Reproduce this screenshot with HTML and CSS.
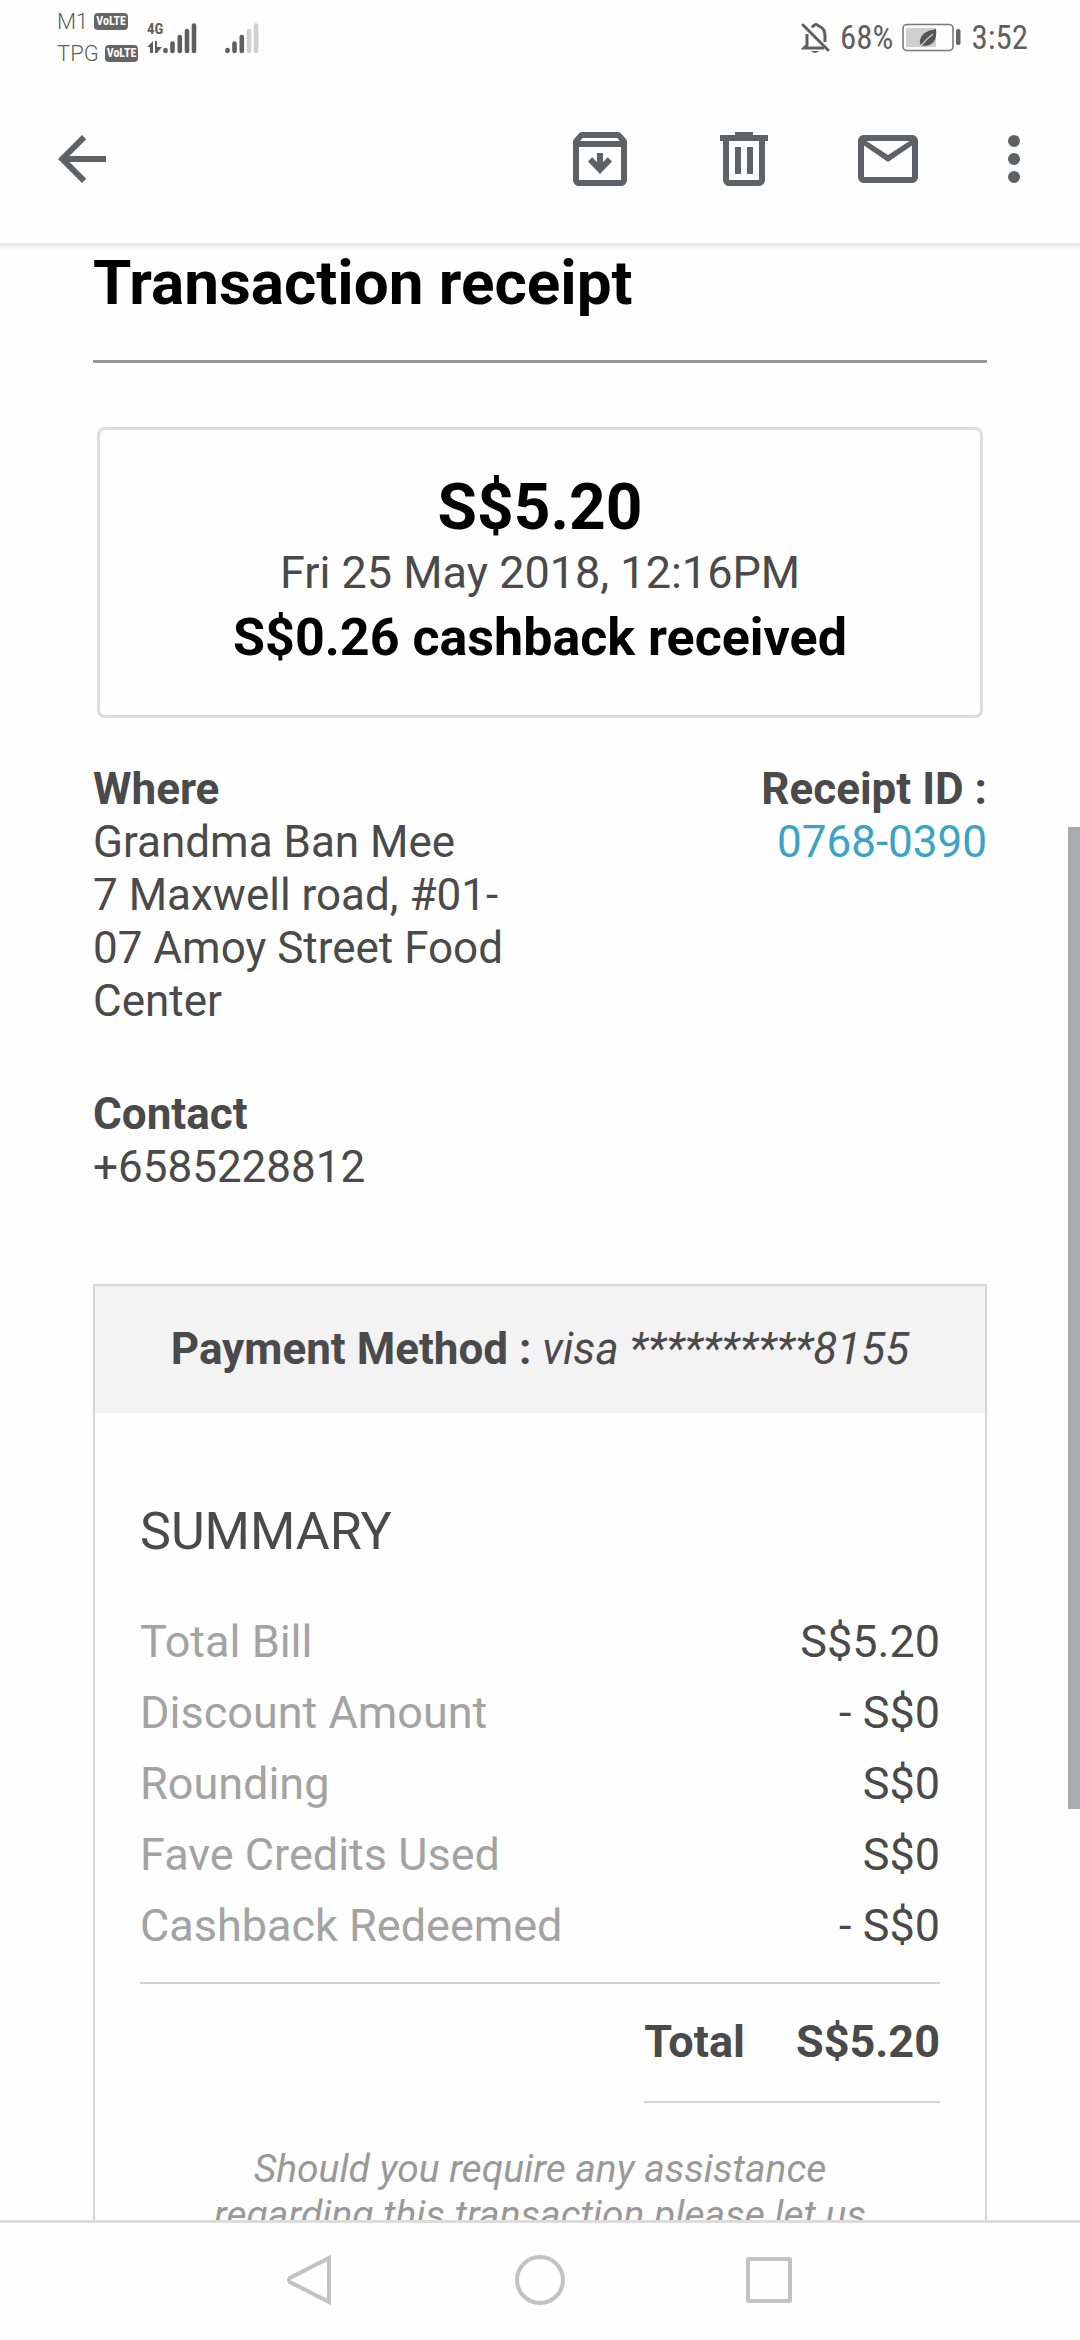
FILE: index.html
```html
<!DOCTYPE html>
<html lang="en">
<head>
<meta charset="utf-8">
<meta name="viewport" content="width=device-width, initial-scale=1">
<title>Transaction receipt</title>
<link rel="stylesheet" href="styles.css">
</head>
<body>
<div class="status">
  <div class="carriers">
    <div class="carrier"><span>M1</span><span class="volte">VoLTE</span></div>
    <div class="carrier"><span>TPG</span><span class="volte">VoLTE</span></div>
  </div>
  <div class="network">
    <span class="network-type">4G</span>
    <svg width="15" height="12" viewBox="0 0 15 12" fill="#5f5f5f"><path d="M6 0v12H3V6H0zM8 0h2v6h5l-5 6H8z"/></svg>
  </div>
  <svg class="signal" width="34" height="32" viewBox="0 0 34 32" stroke="#5f5f5f" stroke-width="4.600" stroke-linecap="round"><path d="M2.500 28v1M9.500 21.500v7.500M16.800 15v14M24 9v20M31 3.500v25.500"/></svg>
  <svg class="signal second" width="34" height="32" viewBox="0 0 34 32" stroke="#5f5f5f" stroke-width="4.600" stroke-linecap="round"><path d="M2.500 28v1M9.500 21.500v7.500M16.800 15v14"/><path stroke="#d0d0d0" d="M24 9v20M31 3.500v25.500"/></svg>
  <div class="status-right">
    <svg width="30" height="32" viewBox="0 0 30 32" fill="none" stroke="#5f5f5f" stroke-width="3"><path d="M6 12v11l-3 3h20M11 5.500Q12 4 12.500 3.800Q15 1 17.500 3.800Q24 6 24 14v6"/><path d="M2 3l25 25" stroke-linecap="round"/><path d="M10 29h8q-4 4-8 0z" fill="#5f5f5f" stroke="none"/></svg>
    <span>68%</span>
    <svg class="battery" width="60" height="30" viewBox="0 0 60 30"><rect x="1" y="1.500" width="50" height="26" rx="4" fill="none" stroke="#7a7a7a" stroke-width="1.600"/><rect x="4" y="5" width="30" height="19" fill="#cfcfcf"/><path d="M34 6Q20 8 18 17q-1 5 3 6Q36 23 34 6z" fill="#555"/><path d="M18 24Q24 16 31 11" stroke="#cfcfcf" stroke-width="1.300" fill="none"/><rect x="54" y="6" width="4.500" height="16" rx="2" fill="#666"/></svg>
    <span>3:52</span>
  </div>
</div>
<header class="toolbar">
  <button class="tool back" aria-label="Back"><svg viewBox="0 0 24 24"><path d="M20 11H7.830l5.590-5.590L12 4l-8 8 8 8 1.410-1.410L7.830 13H20z"/></svg></button>
  <button class="tool" aria-label="Archive"><svg viewBox="0 0 24 24"><path fill-rule="evenodd" d="M20.500 5.200L19 3.500C18.800 3.200 18.400 3 18 3H6c-.4 0-.8.2-1 .5L3.500 5.200C3.200 5.600 3 6 3 6.500V19c0 1.100.9 2 2 2h14c1.100 0 2-.9 2-2V6.500c0-.5-.2-.9-.5-1.300zM6.200 5h11.600l.8 1H5.400zM5 19V8h14v11zM11 10h2v3l1.600-1.600L16 12.800 12 17l-4-4.200 1.400-1.400L11 13z"/></svg></button>
  <button class="tool" aria-label="Delete"><svg viewBox="0 0 24 24"><path fill-rule="evenodd" d="M15 4V3H9v1H4v2h1v13c0 1.100.9 2 2 2h10c1.100 0 2-.9 2-2V6h1V4zM7 6h10v13H7zM9 8h2v9H9zM13 8h2v9h-2z"/></svg></button>
  <button class="tool" aria-label="Mark as unread"><svg viewBox="0 0 24 24"><path fill-rule="evenodd" d="M20 4H4c-1.100 0-2 .9-2 2v12c0 1.100.9 2 2 2h16c1.100 0 2-.9 2-2V6c0-1.100-.9-2-2-2zM19.200 6L12 10.700 4.800 6zM4 18V7.500l8 5.500 8-5.500V18z"/></svg></button>
  <button class="tool more" aria-label="More options"><svg viewBox="0 0 24 24"><circle cx="12" cy="6" r="2"/><circle cx="12" cy="12" r="2"/><circle cx="12" cy="18" r="2"/></svg></button>
</header>
<main class="mail">
  <h1 class="title">Transaction receipt</h1>
  <section class="amount-card">
    <p class="amount">S$5.20</p>
    <p class="date">Fri 25 May 2018, 12:16PM</p>
    <p class="cashback">S$0.26 cashback received</p>
  </section>
  <section class="details">
    <div class="merchant">
      <h2>Where</h2>
      <p>Grandma Ban Mee</p>
      <p>7 Maxwell road, #01-07 Amoy Street Food Center</p>
      <h2 class="contact">Contact</h2>
      <p>+6585228812</p>
    </div>
    <div class="receipt-id">
      <h2>Receipt ID :</h2>
      <a href="#">0768-0390</a>
    </div>
  </section>
  <section class="payment">
    <p class="method"><b>Payment Method :</b> <i>visa **********8155</i></p>
    <div class="summary">
      <h2 class="summary-title">SUMMARY</h2>
      <table class="bill">
        <tr><th scope="row">Total Bill</th><td>S$5.20</td></tr>
        <tr><th scope="row">Discount Amount</th><td>- S$0</td></tr>
        <tr><th scope="row">Rounding</th><td>S$0</td></tr>
        <tr><th scope="row">Fave Credits Used</th><td>S$0</td></tr>
        <tr><th scope="row">Cashback Redeemed</th><td>- S$0</td></tr>
      </table>
      <div class="total"><span>Total</span><span>S$5.20</span></div>
      <p class="help">Should you require any assistance regarding this transaction please let us</p>
    </div>
  </section>
  <div class="scroll-thumb"></div>
</main>
<nav class="navbar">
  <button class="nav-key" aria-label="Back"><svg viewBox="0 0 54 54"><path d="M45 5v44L6 29q-2-2 0-4z"/></svg></button>
  <button class="nav-key" aria-label="Home"><svg viewBox="0 0 54 54"><circle cx="27" cy="27" r="23"/></svg></button>
  <button class="nav-key" aria-label="Recent apps"><svg viewBox="0 0 54 54"><rect x="6" y="6" width="42" height="42" rx="1"/></svg></button>
</nav>
</body>
</html>
```
FILE: styles.css
```css
* { box-sizing: border-box; }
body {
  margin: 0;
  height: 100vh;
  display: flex;
  flex-direction: column;
  overflow: hidden;
  background: #fefefe;
  color: #4a4a4a;
  font: 45px/53px Roboto, "Liberation Sans", sans-serif;
}
h1, h2, p { margin: 0; }
h2 { font-size: inherit; }
button { border: 0; padding: 0; background: none; }
svg { display: block; }

.status {
  height: 75px;
  flex: none;
  display: flex;
  align-items: center;
  padding: 0 52px 0 57px;
  color: #5f5f5f;
}
.carriers { width: 90px; }
.carrier {
  display: flex;
  align-items: center;
  gap: 6px;
  font-size: 22px;
  line-height: 32px;
  font-weight: 300;
}
.volte {
  padding: 0 2px;
  border-radius: 4px;
  background: #666;
  color: #fefefe;
  font: bold 12px/17px "Roboto Condensed", "Liberation Sans Narrow", Roboto, sans-serif;
}
.network {
  width: 16px;
  display: flex;
  flex-direction: column;
  gap: 5px;
}
.network-type { font: bold 15px/14px "Roboto Condensed", "Liberation Sans Narrow", Roboto, sans-serif; }
.signal.second { margin-left: 28px; }
.status-right {
  margin-left: auto;
  display: flex;
  align-items: center;
  gap: 9px;
  font: 33px/40px "Roboto Condensed", "Liberation Sans Narrow", Roboto, sans-serif;
}

.toolbar {
  position: relative;
  z-index: 1;
  height: 168px;
  flex: none;
  display: flex;
  align-items: center;
  gap: 72px;
  padding: 0 30px 0 46px;
}
.toolbar::after {
  content: "";
  position: absolute;
  top: 100%;
  left: 0;
  right: 0;
  height: 8px;
  background: linear-gradient(#e9e9e9, #fefefe);
}
.tool { width: 72px; fill: #5f6166; }
.back { margin-right: auto; }
.more { margin-left: -18px; }

.mail {
  position: relative;
  flex: 1;
  min-height: 0;
  overflow: hidden;
  padding: 2px 93px 0;
}
.title {
  padding-bottom: 40px;
  border-bottom: 3px solid #979797;
  color: #000;
  font-size: 62px;
  line-height: 75px;
}
.amount-card {
  margin: 64px 4px 45px;
  padding: 40px 0;
  border: 3px solid #dcdedd;
  border-radius: 8px;
  text-align: center;
}
.amount, .cashback { color: #000; font-weight: bold; line-height: 75px; }
.amount { font-size: 64px; }
.date { line-height: 55px; }
.cashback { font-size: 52px; }

.details { display: flex; font-size: 44px; }
.merchant, .receipt-id { flex: 1; }
.contact { margin-top: 60px; }
.receipt-id { text-align: right; }
.receipt-id a { color: #3aa3c6; text-decoration: none; }

.payment { margin-top: 90px; border: 2px solid #d6d6d6; }
.method { padding: 37px 0; background: #f3f3f3; font-size: 44px; text-align: center; }
.summary { padding: 88px 45px; }
.summary-title { margin-bottom: 43px; font-size: 52px; line-height: 62px; font-weight: normal; }
.bill {
  width: 100%;
  border-collapse: separate;
  border-spacing: 0;
  padding-bottom: 21px;
  border-bottom: 2px solid #d3d3d3;
  line-height: 71px;
}
.bill th, .bill td { padding: 0; font-weight: normal; }
.bill th { color: #a3a3a3; text-align: left; }
.bill td { text-align: right; }
.total {
  display: flex;
  gap: 51px;
  width: fit-content;
  margin: 31px 0 43px auto;
  padding-bottom: 33px;
  border-bottom: 2px solid #d3d3d3;
  font-weight: bold;
}
.help {
  padding: 0 60px;
  color: #999;
  font-size: 39px;
  line-height: 46px;
  font-style: italic;
  text-align: center;
}
.scroll-thumb {
  position: absolute;
  top: 584px;
  right: 0;
  width: 12px;
  height: 982px;
  background: #aaabb0;
}

.navbar {
  height: 120px;
  flex: none;
  display: flex;
  align-items: center;
  justify-content: center;
  gap: 175px;
  padding-bottom: 3px;
  border-top: 3px solid #dcdcdc;
}
.nav-key { width: 54px; fill: none; stroke: #c2c2c2; stroke-width: 4px; }
```
